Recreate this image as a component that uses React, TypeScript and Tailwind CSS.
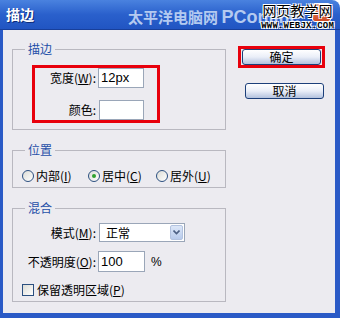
import React from "react";

const cjk = "font-['Noto_Sans_CJK_SC','Noto_Sans',sans-serif]";

function Group({ title, className, children }: { title: string; className?: string; children: React.ReactNode }) {
  return (
    <div className={`relative w-[214px] border border-[#b9b8c0] ${className ?? ""}`}>
      <span className="absolute left-[12px] -top-[9px] bg-[#ecebf0] px-[3px] text-[12px] leading-[16px] text-[#1f4fa8]">
        {title}
      </span>
      {children}
    </div>
  );
}

function XpButton({ label }: { label: string }) {
  return (
    <button className="w-[79px] h-[16px] rounded-[3px] border border-[#1c3f7a] bg-gradient-to-b from-[#ffffff] via-[#eaeef8] to-[#b3c2de] text-[12px] leading-[14px] text-black">
      {label}
    </button>
  );
}

function Radio({ label, hot, checked }: { label: string; hot: string; checked?: boolean }) {
  return (
    <div className="flex items-center">
      <span className="w-[12px] h-[12px] rounded-full border border-[#2b4f80] bg-gradient-to-br from-[#dcdcd6] to-white flex items-center justify-center">
        {checked && <span className="w-[4px] h-[4px] rounded-full bg-[#2fa12f]" />}
      </span>
      <span className="ml-[2px] text-[12px] leading-[16px] text-black">
        {label}(<span className="underline">{hot}</span>)
      </span>
    </div>
  );
}

export default function App() {
  return (
    <div className={`w-[340px] h-[318px] flex flex-col overflow-hidden rounded-tr-[8px] bg-white ${cjk}`}>
      {/* title bar */}
      <div className="relative h-[30px] flex items-center bg-gradient-to-b from-[#4a82df] via-[#2a60cc] to-[#2155c2] border-b border-[#183f9a]">
        <span className="ml-[6px] text-[14px] font-bold text-white [text-shadow:1px_1px_0_#0c2b7a]">描边</span>
        <span className="ml-[94px] mt-[6px] text-[15px] font-bold text-[#b4caf0] whitespace-nowrap">
          太平洋电脑网 <span className="font-['Liberation_Sans',sans-serif] text-[18px]">PConline</span>
        </span>
        <div className="absolute right-[9px] top-[3px] w-[19px] h-[19px] rounded-[3px] border border-white bg-gradient-to-b from-[#e98a6a] to-[#d04a22]" />
        <div className="absolute right-[6px] top-0 flex flex-col items-center">
          <span className="text-[14px] leading-[20px] text-black [text-shadow:1px_1px_0_#fff,-1px_-1px_0_#fff,1px_-1px_0_#fff,-1px_1px_0_#fff]">
            网页教学网
          </span>
          <span className="mt-[1px] font-['Liberation_Mono',monospace] text-[9px] leading-[10px] font-bold tracking-[0.2px] text-black [text-shadow:1px_1px_0_#fff,-1px_-1px_0_#fff,1px_-1px_0_#fff,-1px_1px_0_#fff]">
            WWW.WEBJX.COM
          </span>
        </div>
      </div>

      {/* body */}
      <div className="flex-1 flex bg-[#ecebf0] border-l-[3px] border-r-[5px] border-b-[5px] border-[#2a5ac6]">
        <div className="pl-[9px] pt-[19px] flex flex-col">
          <Group title="描边" className="h-[81px] pl-[19px] pt-[15px]">
            <div className="w-[128px] h-[58px] border-[3px] border-[#e8000c]">
              <div className="grid grid-cols-[61px_46px] gap-x-[2px] items-center">
                <span className="text-right text-[12px] leading-[16px] text-black">
                  宽度(<span className="underline">W</span>):
                </span>
                <div className="h-[20px] border border-[#9aa6b8] bg-white flex items-center pl-[2px] font-['Liberation_Sans',sans-serif] text-[13px] text-black">
                  12px
                </div>
                <span className="mt-[12px] text-right text-[12px] leading-[16px] text-black">颜色:</span>
                <div className="mt-[12px] ml-[1px] h-[20px] border border-[#9aa6b8] bg-white" />
              </div>
            </div>
          </Group>

          <Group title="位置" className="mt-[20px] h-[38px] pl-[9px] pt-[14px] flex items-center">
            <div className="w-[66px]">
              <Radio label="内部" hot="I" />
            </div>
            <div className="w-[68px]">
              <Radio label="居中" hot="C" checked />
            </div>
            <Radio label="居外" hot="U" />
          </Group>

          <Group title="混合" className="mt-[20px] h-[94px] pl-[9px] pt-[14px]">
            <div className="grid grid-cols-[74px_auto] gap-x-[2px] items-center">
              <span className="text-right text-[12px] leading-[16px] text-black">
                模式(<span className="underline">M</span>):
              </span>
              <div className="ml-[1px] w-[86px] h-[19px] border border-[#9aa6b8] bg-white flex items-center">
                <span className="flex-1 pl-[6px] text-[12px] leading-[16px] text-black">正常</span>
                <span className="w-[13px] h-[15px] mr-[1px] rounded-[2px] border border-[#b3c3e0] bg-gradient-to-b from-[#dde7f8] to-[#b8cbec] flex items-center justify-center">
                  <svg width="7" height="5" viewBox="0 0 7 5">
                    <path d="M0.5 0.5 L3.5 3.5 L6.5 0.5" fill="none" stroke="#4d6185" strokeWidth="1.6" />
                  </svg>
                </span>
              </div>
              <span className="mt-[9px] text-right text-[12px] leading-[16px] text-black">
                不透明度(<span className="underline">O</span>):
              </span>
              <div className="mt-[9px] flex items-center">
                <div className="w-[47px] h-[21px] border border-[#9aa6b8] bg-white flex items-center pl-[2px] font-['Liberation_Sans',sans-serif] text-[13px] text-black">
                  100
                </div>
                <span className="ml-[6px] font-['Liberation_Sans',sans-serif] text-[12px] text-black">%</span>
              </div>
            </div>
            <div className="mt-[10px] flex items-center">
              <span className="w-[12px] h-[12px] border border-[#2b4f80] bg-gradient-to-br from-[#dcdcd6] to-white" />
              <span className="ml-[3px] text-[12px] leading-[16px] text-black">
                保留透明区域(<span className="underline">P</span>)
              </span>
            </div>
          </Group>
        </div>

        <div className="ml-[12px] pt-[16px] flex flex-col">
          <div className="w-[87px] h-[22px] border-[3px] border-[#e8000c] flex items-center justify-center">
            <XpButton label="确定" />
          </div>
          <div className="mt-[9px] ml-[7px]">
            <XpButton label="取消" />
          </div>
        </div>
      </div>
    </div>
  );
}
